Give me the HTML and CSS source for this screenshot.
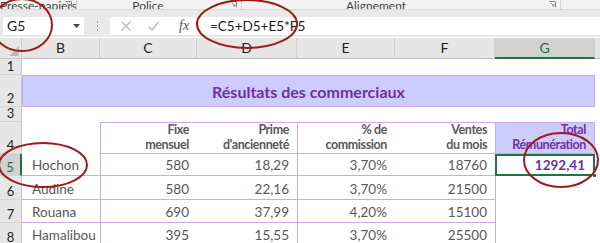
FILE: index.html
```html
<!DOCTYPE html>
<html lang="fr">
<head>
<meta charset="utf-8">
<link rel="stylesheet" href="styles.css">
</head>
<body>
<div class="app">
  <div class="ribbon">
    <div class="rgroup g1"><span class="rlabel">Presse-papiers</span><svg class="launch" width="7" height="7" viewBox="0 0 7 7"><path d="M0.5 0.5H6.5V6.5" fill="none" stroke="#8a8a8a"/><path d="M2 2L5 5M5 3V5H3" fill="none" stroke="#8a8a8a"/></svg></div>
    <div class="rgroup g2"><span class="rlabel">Police</span><svg class="launch" width="7" height="7" viewBox="0 0 7 7"><path d="M0.5 0.5H6.5V6.5" fill="none" stroke="#8a8a8a"/><path d="M2 2L5 5M5 3V5H3" fill="none" stroke="#8a8a8a"/></svg></div>
    <div class="rgroup g3"><span class="rlabel">Alignement</span><svg class="launch" width="7" height="7" viewBox="0 0 7 7"><path d="M0.5 0.5H6.5V6.5" fill="none" stroke="#8a8a8a"/><path d="M2 2L5 5M5 3V5H3" fill="none" stroke="#8a8a8a"/></svg></div>
    <div class="rgroup g4"></div>
  </div>
  <div class="fbar">
    <div class="namebox"><span class="nbtext">G5</span><svg width="7" height="4" viewBox="0 0 7 4"><path d="M0 0H7L3.5 4Z" fill="#444"/></svg></div>
    <svg class="grip" width="3" height="12" viewBox="0 0 3 12"><rect x="1" y="1" width="1" height="2" fill="#9a9a9a"/><rect x="1" y="5" width="1" height="2" fill="#9a9a9a"/><rect x="1" y="9" width="1" height="2" fill="#9a9a9a"/></svg>
    <div class="formula">
      <div class="ficons">
        <svg width="12" height="12" viewBox="0 0 12 12"><path d="M1.5 1.5L10.5 10.5M10.5 1.5L1.5 10.5" stroke="#b5b5b5" stroke-width="1.2"/></svg>
        <svg width="13" height="12" viewBox="0 0 13 12"><path d="M1.5 6.5L5 10L11.5 2" fill="none" stroke="#b5b5b5" stroke-width="1.3"/></svg>
        <span class="fx">fx</span>
      </div>
      <div class="ftext">=C5+D5+E5*F5</div>
    </div>
  </div>
  <div class="sheet">
    <div class="corner"><svg width="10" height="10" viewBox="0 0 10 10"><path d="M10 0V10H0Z" fill="#bcbcbc"/></svg></div>
    <div class="ch">B</div>
    <div class="ch">C</div>
    <div class="ch">D</div>
    <div class="ch">E</div>
    <div class="ch">F</div>
    <div class="ch ch-sel">G</div>
    <div class="ch ch-last"></div>

    <div class="rh">1</div>
    <div class="blank span7"></div>

    <div class="rh">2</div>
    <div class="title">Résultats des commerciaux</div>
    <div class="blank"></div>

    <div class="rh">3</div>
    <div class="blank span7"></div>

    <div class="rh">4</div>
    <div class="blank"></div>
    <div class="cell hd bl">Fixe<br>mensuel</div>
    <div class="cell hd">Prime<br>d'ancienneté</div>
    <div class="cell hd bl">% de<br>commission</div>
    <div class="cell hd">Ventes<br>du mois</div>
    <div class="cell hd total bl br">Total<br>Rémunération</div>
    <div class="blank"></div>

    <div class="rh rh-sel">5</div>
    <div class="cell name">Hochon</div>
    <div class="cell bl">580</div>
    <div class="cell">18,29</div>
    <div class="cell bl">3,70%</div>
    <div class="cell">18760</div>
    <div class="cell sel">1292,41<span class="handle"></span></div>
    <div class="blank"></div>

    <div class="rh">6</div>
    <div class="cell name">Audine</div>
    <div class="cell bl">580</div>
    <div class="cell">22,16</div>
    <div class="cell bl">3,70%</div>
    <div class="cell">21500</div>
    <div class="cell gl"></div>
    <div class="blank"></div>

    <div class="rh">7</div>
    <div class="cell name">Rouana</div>
    <div class="cell bl">690</div>
    <div class="cell">37,99</div>
    <div class="cell bl">4,20%</div>
    <div class="cell">15100</div>
    <div class="cell gl"></div>
    <div class="blank"></div>

    <div class="rh">8</div>
    <div class="cell name">Hamalibou</div>
    <div class="cell bl">395</div>
    <div class="cell">15,55</div>
    <div class="cell bl">3,70%</div>
    <div class="cell">25500</div>
    <div class="cell gl"></div>
    <div class="blank"></div>
  </div>
  <svg class="annot" width="600" height="243" viewBox="0 0 600 243">
    <g fill="none" stroke="#9b1c1f" stroke-width="2">
      <ellipse cx="22" cy="25" rx="30" ry="26"/>
      <ellipse cx="247" cy="24" rx="50" ry="24"/>
      <ellipse cx="43" cy="165" rx="44" ry="22"/>
      <ellipse cx="561" cy="160" rx="37" ry="27"/>
    </g>
  </svg>
</div>
</body>
</html>
```

FILE: styles.css
```css
* { box-sizing: border-box; }
html, body { margin: 0; padding: 0; }
body {
  width: 600px;
  height: 243px;
  overflow: hidden;
  background: #ffffff;
  font-family: Lato, "Open Sans", sans-serif;
}
.app { position: relative; width: 600px; height: 243px; overflow: hidden; }

/* ribbon group labels */
.ribbon {
  display: flex;
  height: 10px;
  background: #f3f3f3;
  border-bottom: 1px solid #dadada;
  overflow: hidden;
}
.rgroup {
  position: relative;
  display: flex;
  justify-content: center;
  align-items: flex-end;
  border-right: 1px solid #d4d4d4;
  height: 9px;
  overflow: hidden;
}
.g1 { width: 77px; justify-content: flex-start; padding-left: 0; }
.g2 { width: 165px; padding-right: 22px; }
.g3 { width: 319px; padding-right: 50px; }
.g4 { flex: 1; border-right: none; }
.rlabel {
  font-size: 12px;
  line-height: 12px;
  color: #444;
  margin-bottom: -3px;
  white-space: nowrap;
}
.launch { position: absolute; right: 4px; top: 1px; }

/* formula bar */
.fbar {
  display: flex;
  align-items: center;
  height: 27px;
  padding: 6px 0 2px 3px;
  background: #e9e9e9;
}
.namebox {
  width: 81px;
  height: 18px;
  background: #fff;
  display: flex;
  align-items: center;
  justify-content: space-between;
  padding: 0 4px 0 4px;
}
.nbtext { font-size: 14px; color: #222; }
.grip { margin: 0 11px 0 12px; }
.formula {
  flex: 1;
  height: 18px;
  background: #fff;
  display: flex;
  align-items: center;
}
.ficons {
  display: flex;
  align-items: center;
  gap: 15px;
  padding-left: 10px;
  width: 98px;
  height: 100%;
}
.fx {
  font-family: "Liberation Serif", serif;
  font-style: italic;
  font-size: 14px;
  color: #555;
  margin-left: 4px;
}
.ftext { font-size: 13.5px; color: #222; padding-left: 2px; }

/* sheet grid */
.sheet {
  display: grid;
  grid-template-columns: 22px 78px 97px 100px 98px 100px 100px 5px;
  grid-template-rows: 21px 16px 32px 15px 32px 22px 24px 23px 23px;
  margin-top: 1px;
  font-size: 13.5px;
  color: #595959;
}
.corner {
  background: #e6e6e6;
  border-right: 1px solid #c8c8c8;
  border-bottom: 1px solid #c8c8c8;
  display: flex;
  align-items: flex-end;
  justify-content: flex-end;
  padding: 0 2px 2px 0;
}
.ch {
  background: #e6e6e6;
  border-right: 1px solid #d0d0d0;
  border-bottom: 1px solid #bdbdbd;
  text-align: center;
  font-size: 14px;
  color: #222;
  line-height: 20px;
}
.ch-sel { background: #d2d2d2; color: #217346; border-bottom: 2px solid #217346; }
.ch-last { border-right: none; }
.rh {
  background: #e6e6e6;
  border-right: 1px solid #c8c8c8;
  border-bottom: 1px solid #d4d4d4;
  font-size: 13px;
  color: #222;
  text-align: center;
  display: flex;
  align-items: flex-end;
  justify-content: center;
  padding-bottom: 1px;
  line-height: 14px;
}
.rh-sel { background: #d2d2d2; color: #217346; border-right: 2px solid #217346; }
.blank { background: #fff; }
.span7 { grid-column: span 7; }
.title {
  grid-column: span 6;
  background: #ccccff;
  border: 1px solid #c6a8e4;
  color: #7030a0;
  font-weight: 700;
  font-size: 16px;
  display: flex;
  align-items: center;
  justify-content: center;
}
.cell {
  display: flex;
  align-items: flex-end;
  justify-content: flex-end;
  text-align: right;
  padding: 0 8px 2px 4px;
  line-height: 15px;
  border-bottom: 1px solid #cfa9e6;
  white-space: nowrap;
}
.cell.name { justify-content: flex-start; padding-left: 10px; }
.bl { border-left: 1px solid #cfa9e6; }
.br { border-right: 1px solid #cfa9e6; }
.hd {
  font-weight: 700;
  font-size: 12.5px;
  letter-spacing: -0.4px;
  line-height: 15px;
  padding-bottom: 1px;
  border-top: 1px solid #cfa9e6;
}
.total { background: #ccccff; color: #7030a0; }
.gl { border-bottom: none; border-left: 1px solid #cfa9e6; }
.sel {
  position: relative;
  border: 2px solid #217346;
  color: #7030a0;
  font-weight: 700;
  padding-bottom: 1px;
}
.handle {
  position: absolute;
  right: -4px;
  bottom: -4px;
  width: 5px;
  height: 5px;
  background: #217346;
  border: 1px solid #fff;
}
.annot { position: absolute; left: 0; top: 0; pointer-events: none; }
```
